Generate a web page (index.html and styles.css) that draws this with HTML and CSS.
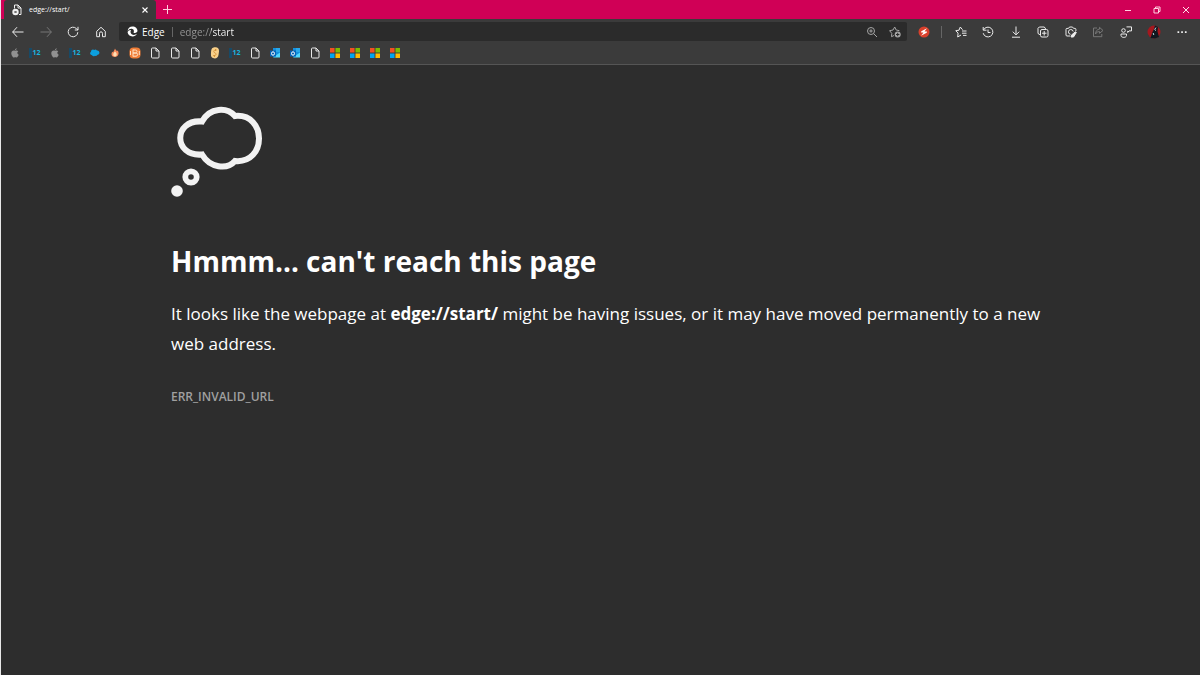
FILE: index.html
```html
<!DOCTYPE html>
<html lang="en">
<head>
<meta charset="utf-8">
<meta name="viewport" content="width=device-width, initial-scale=1">
<title>edge://start/</title>
<link rel="stylesheet" href="styles.css">
</head>
<body>
<svg class="defs" aria-hidden="true">
  <symbol id="apple" viewBox="0 0 10 10"><path fill="#919191" d="M6.700.2c.1 1-.7 1.900-1.700 1.900C4.900 1.200 5.800.3 6.700.2zM8.300 3.300c-1.500.9-1.200 2.800.4 3.400C8.200 8 7.300 9.700 6.400 9.500c-.8-.4-1.500-.3-2.200 0C3.100 9.900 1.300 7.200 1.300 5.200c0-2.700 2.300-3.300 3.800-2.400.9-.5 2.500-.5 3.200.5z"/></symbol>
  <symbol id="cloud" viewBox="0 0 10 8"><path fill="#0c9fde" d="M1 2.700A2 2 0 0 1 4.200 1a2 2 0 0 1 2.700.6 2.100 2.100 0 1 1 .7 4.200A2 2 0 0 1 5 6.700a2 2 0 0 1-3-.5A1.900 1.900 0 0 1 1 2.700z"/></symbol>
  <symbol id="flame" viewBox="0 0 10 10"><path fill="#f58a5b" d="M5 .5C5.600 2 6.500 2 6.800 3.200L7.700 2.600C9.500 5 8.600 9 5 9 1.500 9 .8 6.400 2.200 3.800l1 .7C3.400 2.800 4.700 2.200 5 .5z"/><path fill="#ffe0b5" d="M5 3.500c2.300 1.600 2.300 4.900 0 4.900S2.700 5.500 5 3.500z"/></symbol>
  <symbol id="badge" viewBox="0 0 12 12"><rect x=".5" y=".5" width="11" height="11" rx="4" fill="#ef7d37"/><path d="M4 2.500v7M4 3h2.500a1.500 1.500 0 0 1 0 3H4h3a1.600 1.600 0 0 1 0 3.200H4M1.500 4v4M10.300 4v4" fill="none" stroke="#ffe2c5"/></symbol>
  <symbol id="doc" viewBox="0 0 10 12"><path fill="none" stroke="#e8e8e8" stroke-linejoin="round" d="M1.500 2A1 1 0 0 1 2.500 1H6L9 4v6a1 1 0 0 1-1 1H2.500a1 1 0 0 1-1-1zM6 1v3h3"/></symbol>
  <symbol id="coin" viewBox="0 0 10 12"><path fill="#f8d08a" d="M3 .8C7-.5 9.300 1 9 4.500L8.500 8C8 11 5.500 12 3 11 1 10.500.8 9 1 6c.1-3 .5-4.700 2-5.200z"/><path d="M6.800 3C4 2.200 2.700 5 4.800 5.800 7.500 7 5.300 9.500 3 8.500M5.500 2v2M4.500 8v2" fill="none" stroke="#d08a2e" stroke-width=".8"/></symbol>
  <symbol id="outlook" viewBox="0 0 12 12"><path fill="#1490df" d="M4 1h7v9H4z"/><path fill="#28a8ea" d="M7 1h4v4H7z"/><path fill="#50d9ff" d="M4 10.500 11 5.500v5z"/><path fill="#0763b5" d="M1 3.500h6v6H1z"/><ellipse cx="4" cy="6.500" rx="1.500" ry="1.700" fill="none" stroke="#fff"/></symbol>
  <symbol id="windows" viewBox="0 0 11 11"><path fill="#f25022" d="M0 0h5v5H0z"/><path fill="#7fba00" d="M6 0h5v5H6z"/><path fill="#00a4ef" d="M0 6h5v5H0z"/><path fill="#ffb900" d="M6 6h5v5H6z"/></symbol>
</svg>

<header class="browser">
  <div class="titlebar">
    <div class="tab">
      <svg class="tab-icon" viewBox="0 0 10 12" aria-hidden="true"><path fill="none" stroke="#f1f1f1" d="M2.500 4.500V1H6l3 3v6.500H7M6 1v3h3"/><circle cx="3.500" cy="8" r="3.200" fill="#f1f1f1"/><path d="m2.500 7 2 2m0-2-2 2" stroke="#3b3b3b" stroke-width=".9"/></svg>
      <span class="tab-title">edge://start/</span>
      <button class="tab-close" aria-label="Close tab"><svg width="6" height="6" viewBox="0 0 6 6"><path d="m.5.500 5 5m0-5-5 5" stroke="#fff" stroke-width="1.100"/></svg></button>
    </div>
    <button class="new-tab" aria-label="New tab"><svg width="9" height="9" viewBox="0 0 9 9"><path d="M4.500 0v9M0 4.500h9" stroke="#ffd0df"/></svg></button>
    <div class="window-controls">
      <button aria-label="Minimize"><svg width="8" height="8" viewBox="0 0 8 8"><path d="M1 4.500h6" stroke="#ffd0df"/></svg></button>
      <button aria-label="Restore"><svg width="8" height="8" viewBox="0 0 8 8"><path fill="none" stroke="#ffd0df" d="M1 2.500h4.500V7H1zM2.500 2.500v-1.500H7v4.500H5.500"/></svg></button>
      <button aria-label="Close window"><svg width="8" height="8" viewBox="0 0 8 8"><path d="m1 1 6 6m0-6L1 7" stroke="#ffe0ea"/></svg></button>
    </div>
  </div>

  <div class="toolbar">
    <nav class="nav" aria-label="Navigation">
      <button aria-label="Back"><svg viewBox="0 0 12 12"><path d="M11.500 6h-11M5 1.200.7 6 5 10.800"/></svg></button>
      <button class="dim" aria-label="Forward" disabled><svg viewBox="0 0 12 12"><path d="M.5 6h11M7 1.200 11.300 6 7 10.800"/></svg></button>
      <button aria-label="Refresh"><svg viewBox="0 0 12 12"><path d="M10.800 6.200A4.800 4.800 0 1 1 9.500 2.700L11 4M11 .8V4H7.800"/></svg></button>
      <button aria-label="Home"><svg viewBox="0 0 12 12"><path d="M1.700 5.300 6 1.300l4.300 4v5.400H7.500V7.300a1.500 1.500 0 0 0-3 0v3.400H1.700z"/></svg></button>
    </nav>
    <div class="address">
      <svg class="edge-logo" viewBox="0 0 12 12" aria-hidden="true"><path fill="#fff" d="M.7 5.500C.8 2.500 3 .6 6 .6c3.200 0 5.400 2.200 5.400 4.600 0 2-2.300 2.900-4.300 2.100.9-1.400.5-3.400-1.200-4C4.100 2.700 2 3.400.7 5.500z"/><path fill="#fff" d="M.6 6.600c.8-1.500 2.200-2.500 3.800-2.300-1.500 2.600.2 5.400 3.100 5.400 1.300 0 2.400-.5 3.300-1.200-1 2-2.700 2.900-4.700 2.900-3 0-5.300-2-5.500-4.800z"/></svg>
      <label class="address-label" for="url">Edge</label>
      <span class="address-rule"></span>
      <input class="url" id="url" type="text" value="edge://start" spellcheck="false">
      <button class="soft" aria-label="Zoom"><svg viewBox="0 0 12 12"><circle cx="5" cy="5" r="3.500"/><path d="m7.700 7.700 3.300 3.300M3.300 5h3.400M5 3.300v3.400"/></svg></button>
      <button class="soft" aria-label="Add to favorites"><svg viewBox="0 0 12 12"><path d="M5 9.500 2.500 10.700l.3-3.300L.6 4.700 4 4l1.700-3 1.500 3 3.200.7"/><circle cx="8.700" cy="8.500" r="3" fill="#a5a5a5" stroke="none"/><path d="M7 8.500h3.400M8.700 6.800v3.400" stroke="#2b2b2b"/></svg></button>
    </div>
    <button class="extension" aria-label="Extension"><svg viewBox="0 0 12 12"><circle cx="6" cy="6" r="5.500" fill="#d9402c" stroke="none"/><path fill="#fff" stroke="none" d="M9 2.300 3.300 5.200 3 6.600l2.500-.2L3 9.700l5.700-2.900.3-1.400-2.500.2z"/></svg></button>
    <span class="tool-rule"></span>
    <div class="tools">
      <button aria-label="Favorites"><svg viewBox="0 0 12 12"><path d="M7.500 3.700 5.300 1 4 4.200.8 4.700l2.300 2.400L2.700 11 6 9M7 5h4.500M7 7.200h4.500M8 9.400h3.500"/></svg></button>
      <button aria-label="History"><svg viewBox="0 0 12 12"><path d="M1.500 4A4.900 4.900 0 1 1 1.200 7.200M1.200 1v3.200h3.300M6 3.500v3h2.500"/></svg></button>
      <button aria-label="Downloads"><svg viewBox="0 0 12 12"><path d="M6 .5v8.200M2.800 5.700 6 8.900l3.200-3.200M2 11.200h8"/></svg></button>
      <button aria-label="Collections"><svg viewBox="0 0 12 12"><path d="M3 8.700 1 7.500V2.300L2.300 1h5l1.400 2"/><rect x="3.500" y="3.500" width="7.500" height="7.500" rx="1.500"/><path d="M5 7.200h4.500M7.200 5v4.500"/></svg></button>
      <button aria-label="Web capture"><svg viewBox="0 0 12 12"><path d="M10.900 5V3.400a1 1 0 0 0-1-1H8.600L7.500 1h-3l-1 1.400H2a1 1 0 0 0-1 1V9a1 1 0 0 0 1 1h3"/><path d="M5.500 8.300A2.400 2.400 0 1 1 8.200 5.500"/><path fill="#eee" d="m6.500 9 4-3.300.8.800L8.500 11H6z"/></svg></button>
      <button class="dim" aria-label="Share"><svg viewBox="0 0 12 12"><path d="M5 2H1.500v8.700h8.300V8M7.500 1.300 11 4.500 7.500 7.300V5.600C5.500 5.500 4.300 6.500 3.500 8c.2-2.900 1.600-4.700 4-4.900z"/></svg></button>
      <button aria-label="Feedback"><svg viewBox="0 0 12 12"><circle cx="3.500" cy="4.500" r="1.800"/><path d="M1 8h5.500v1.500C6.500 12 1 12 1 9.500zM6.500.900h5v4H9L7.700 6.500V4.900"/></svg></button>
    </div>
    <button class="profile" aria-label="Profile"><svg viewBox="0 0 14 14"><circle cx="7" cy="7" r="6.500" fill="#a5171e" stroke="none"/><path fill="#101820" stroke="none" d="M8 .6 11 2l-.5 4.500L12 12l-4 1.600-4.500-.7L5.500 7 7 4z"/><path d="m9 2.500-1.300 2L9 5.600M6.200 8l.6 2" stroke="#bdd6df"/></svg></button>
    <button class="more" aria-label="Settings and more"><svg viewBox="0 0 12 12"><path fill="#eee" stroke="none" d="M1.500 5.300h1.700V7H1.500zM5.200 5.300h1.700V7H5.200zM8.900 5.300h1.700V7H8.900z"/></svg></button>
  </div>

  <nav class="favorites" aria-label="Favorites bar">
    <a href="#" aria-label="Apple"><svg class="i-small"><use href="#apple"/></svg></a>
    <a class="twelve" href="#"><span>12</span></a>
    <a href="#" aria-label="Apple"><svg class="i-small"><use href="#apple"/></svg></a>
    <a class="twelve" href="#"><span>12</span></a>
    <a href="#" aria-label="Cloud"><svg class="i-cloud"><use href="#cloud"/></svg></a>
    <a href="#" aria-label="Flame"><svg class="i-small"><use href="#flame"/></svg></a>
    <a href="#" aria-label="Badge"><svg class="i-large"><use href="#badge"/></svg></a>
    <a href="#" aria-label="Page"><svg class="i-doc"><use href="#doc"/></svg></a>
    <a href="#" aria-label="Page"><svg class="i-doc"><use href="#doc"/></svg></a>
    <a href="#" aria-label="Page"><svg class="i-doc"><use href="#doc"/></svg></a>
    <a href="#" aria-label="Coin"><svg class="i-doc"><use href="#coin"/></svg></a>
    <a class="twelve" href="#"><span>12</span></a>
    <a href="#" aria-label="Page"><svg class="i-doc"><use href="#doc"/></svg></a>
    <a href="#" aria-label="Outlook"><svg class="i-large"><use href="#outlook"/></svg></a>
    <a href="#" aria-label="Outlook"><svg class="i-large"><use href="#outlook"/></svg></a>
    <a href="#" aria-label="Page"><svg class="i-doc"><use href="#doc"/></svg></a>
    <a href="#" aria-label="Microsoft"><svg class="i-win"><use href="#windows"/></svg></a>
    <a href="#" aria-label="Microsoft"><svg class="i-win"><use href="#windows"/></svg></a>
    <a href="#" aria-label="Microsoft"><svg class="i-win"><use href="#windows"/></svg></a>
    <a href="#" aria-label="Microsoft"><svg class="i-win"><use href="#windows"/></svg></a>
  </nav>
</header>

<main class="error-page">
  <svg class="thought" width="92" height="92" viewBox="0 0 92 92" aria-hidden="true">
    <path fill="none" stroke="#f2f2f2" stroke-width="6" d="M31 15.500C39 1 56 1 64 10c32-3 32 48 0 45-8 9-25 7-33-6.500C2 51 2 13 31 15.500z"/>
    <circle cx="20" cy="71" r="5.700" fill="none" stroke="#f2f2f2" stroke-width="5.800"/>
    <circle cx="6" cy="85" r="5.800" fill="#f2f2f2"/>
  </svg>
  <h1>Hmmm… can't reach this page</h1>
  <p class="message">It looks like the webpage at <strong>edge://start/</strong> might be having issues, or it may have moved permanently to a new web address.</p>
  <p class="code">ERR_INVALID_URL</p>
</main>
</body>
</html>
```

FILE: styles.css
```css
* { box-sizing: border-box; }

body {
  margin: 0;
  min-height: 100vh;
  border-left: 1px solid #e8e8e8;
  background: #2d2d2d;
  color: #fff;
  font-family: "Open Sans", "Noto Sans", sans-serif;
}

button {
  display: flex;
  align-items: center;
  justify-content: center;
  padding: 0;
  border: 0;
  background: none;
}

svg { display: block; flex: none; }
.defs { position: absolute; width: 0; height: 0; }

.browser {
  background: #3b3b3b;
  border-bottom: 1px solid #555;
}

.titlebar {
  display: flex;
  height: 19px;
  padding-left: 3px;
  background: #d00056;
}

.tab {
  display: flex;
  align-items: center;
  width: 152px;
  padding: 0 7px 0 8px;
  border-radius: 3px 3px 0 0;
  background: #3b3b3b;
}

.tab-icon { width: 10px; height: 12px; }
.tab-title { flex: 1; margin-left: 7px; font-size: 7px; line-height: 18px; }
.tab-close { width: 8px; height: 12px; }
.new-tab { width: 22px; }
.window-controls { display: flex; margin-left: auto; }
.window-controls button { width: 29px; }

.toolbar {
  display: flex;
  align-items: center;
  height: 25px;
  padding: 0 11px 0 7px;
}

.toolbar button svg {
  width: 12px;
  height: 12px;
  fill: none;
  stroke: #ececec;
}
.toolbar .dim svg { stroke: #777; }
.toolbar .soft svg { stroke: #a5a5a5; }

.nav {
  display: flex;
  justify-content: space-between;
  width: 103px;
  margin-right: 8px;
}
.nav button { width: 20px; height: 20px; }

.address {
  display: flex;
  flex: 1;
  align-items: center;
  min-width: 0;
  height: 19px;
  padding: 0 1px 0 8px;
  border-radius: 2px;
  background: #2b2b2b;
}
.edge-logo { width: 11px; height: 11px; }
.address-label { margin-left: 4px; font-size: 10px; }
.address-rule { width: 1px; height: 10px; margin: 0 7px; background: #666; }

.url {
  flex: 1;
  min-width: 0;
  padding: 0;
  border: 0;
  outline: 0;
  background: linear-gradient(90deg, #999 31px, #fff 31px);
  background-clip: text;
  color: transparent;
  font: 10px/16px "Open Sans", "Noto Sans", sans-serif;
}
.address button { width: 23px; height: 18px; }

.extension { width: 34px; height: 20px; }
.tool-rule { width: 1px; height: 12px; background: #666; }

.tools {
  display: flex;
  justify-content: space-between;
  width: 178px;
  margin-left: 12px;
}
.tools button { width: 13px; height: 20px; }
.profile { width: 14px; margin-left: 15px; }
.toolbar .profile svg { width: 14px; height: 14px; }
.more { width: 14px; margin-left: 14px; }

.favorites {
  display: flex;
  height: 20px;
  padding: 0 4px 3px;
}
.favorites a {
  display: flex;
  align-items: center;
  justify-content: center;
  width: 20px;
  color: #16b5e0;
  text-decoration: none;
}
.twelve { font-size: 7px; font-weight: 700; line-height: 10px; }
.twelve span { border-left: 3px solid #174a67; }
.i-small { width: 10px; height: 10px; }
.i-large { width: 12px; height: 12px; }
.i-cloud { width: 10px; height: 8px; }
.i-doc { width: 10px; height: 12px; }
.i-win { width: 10px; height: 10px; }

.error-page { padding: 41px 150px 40px 170px; }

h1 {
  margin: 43px 0 0;
  font-size: 28px;
  line-height: 40px;
}

.message {
  margin: 18px 0 0;
  font-size: 17px;
  line-height: 30px;
}

.code {
  margin: 28px 0 0;
  color: #a0a0a0;
  font-size: 12px;
  font-weight: 600;
  line-height: 20px;
}
```
